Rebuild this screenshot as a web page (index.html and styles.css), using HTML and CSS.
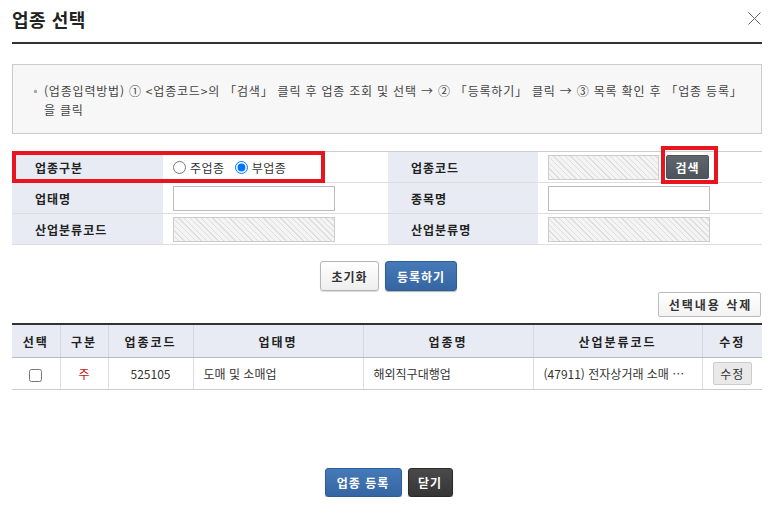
FILE: index.html
```html
<!DOCTYPE html>
<html lang="ko">
<head>
    <meta charset="UTF-8">
    <meta name="viewport" content="width=device-width, initial-scale=1.0">
    <title>업종 선택</title>
    <link rel="stylesheet" href="styles.css">
</head>
<body>
    <div class="pop_wrap">
        <div class="pop_head">
            <h1 class="pop_title">업종 선택</h1>
            <span class="pop_close" title="닫기">
                <svg width="13" height="13" viewBox="0 0 13 13">
                    <path d="M0.5 0.5 L12.5 12.5 M12.5 0.5 L0.5 12.5" stroke="#666" stroke-width="1" fill="none"/>
                </svg>
            </span>
        </div>

        <div class="guide_box">
            <p><span class="bullet"></span>(업종입력방법) ① &lt;업종코드&gt;의 「검색」 클릭 후 업종 조회 및 선택 → ② 「등록하기」 클릭 → ③ 목록 확인 후 「업종 등록」 을 클릭</p>
        </div>

        <div class="form_con">
            <div class="form_grid">
                <div class="th">업종구분</div>
                <div class="td">
                    <label class="rdo"><input type="radio" name="gubun"> 주업종</label>
                    <label class="rdo"><input type="radio" name="gubun" checked> 부업종</label>
                </div>
                <div class="th">업종코드</div>
                <div class="td">
                    <input type="text" class="ipt ipt_short ipt_dis" disabled>
                    <button class="btn_search">검색</button>
                </div>

                <div class="th">업태명</div>
                <div class="td"><input type="text" class="ipt"></div>
                <div class="th">종목명</div>
                <div class="td"><input type="text" class="ipt"></div>

                <div class="th">산업분류코드</div>
                <div class="td"><input type="text" class="ipt ipt_dis" disabled></div>
                <div class="th">산업분류명</div>
                <div class="td"><input type="text" class="ipt ipt_dis" disabled></div>
            </div>
            <!-- 강조 표시 -->
            <div class="mark mark_gubun"></div>
            <div class="mark mark_search"></div>
        </div>

        <div class="btn_row">
            <button class="btn btn_white">초기화</button>
            <button class="btn btn_blue">등록하기</button>
        </div>

        <div class="del_row">
            <button class="btn_del">선택내용 삭제</button>
        </div>

        <table class="list_tbl">
            <colgroup>
                <col style="width:48px">
                <col style="width:48px">
                <col style="width:85px">
                <col style="width:170px">
                <col style="width:170px">
                <col style="width:169px">
                <col style="width:60px">
            </colgroup>
            <thead>
                <tr>
                    <th>선택</th>
                    <th>구분</th>
                    <th>업종코드</th>
                    <th>업태명</th>
                    <th>업종명</th>
                    <th>산업분류코드</th>
                    <th>수정</th>
                </tr>
            </thead>
            <tbody>
                <tr>
                    <td class="c"><input type="checkbox" class="chk"></td>
                    <td class="c red">주</td>
                    <td class="c">525105</td>
                    <td>도매 및 소매업</td>
                    <td>해외직구대행업</td>
                    <td class="ell">(47911) 전자상거래 소매 …</td>
                    <td class="c"><button class="btn_edit">수정</button></td>
                </tr>
            </tbody>
        </table>

        <div class="foot_btns">
            <button class="btn btn_blue btn_foot">업종 등록</button>
            <button class="btn btn_dark btn_foot">닫기</button>
        </div>
    </div>
</body>
</html>
```

FILE: styles.css
```css
body,h1,p{
    margin: 0;
    padding: 0;
}
body{
    font-family: "Noto Sans CJK KR", "Noto Sans", sans-serif;
    font-size: 12px;
    color: #333;
    background-color: #fff;
}
button{
    font-family: inherit;
    cursor: pointer;
}
.pop_wrap{
    width: 750px;
    padding: 0 14px 0 12px;
}
.pop_head{
    height: 42px;
    border-bottom: 2px solid #333;
    display: flex;
    justify-content: space-between;
    align-items: flex-start;
}
.pop_title{
    font-size: 18px;
    font-weight: 700;
    color: #222;
    line-height: 22px;
    padding-top: 8px;
    letter-spacing: 0.5px;
}
.pop_close{
    display: block;
    width: 13px;
    height: 13px;
    margin-top: 11px;
    margin-right: 1px;
}
.guide_box{
    margin-top: 20px;
    border: 1px solid #ccc;
    background-color: #f7f7f7;
    padding: 16px 10px 14px 21px;
    height: 38px;
}
.guide_box p{
    line-height: 19px;
    color: #444;
    letter-spacing: 0.8px;
    padding-left: 10px;
    text-indent: -10px;
    word-break: keep-all;
}
.bullet{
    display: inline-block;
    width: 3px;
    height: 3px;
    background-color: #aaa;
    vertical-align: middle;
    margin: 0 7px 2px 0;
    text-indent: 0;
}
.form_con{
    margin-top: 17px;
    position: relative;
}
.form_grid{
    display: grid;
    grid-template-columns: 151px 225px 150px 224px;
    grid-auto-rows: 31px;
    border-top: 1px solid #ccc;
}
.th,.td{
    border-bottom: 1px solid #ddd;
    display: flex;
    align-items: center;
}
.th{
    background-color: #e8ebf3;
    font-weight: 700;
    color: #222;
    letter-spacing: 1px;
    padding-left: 23px;
}
.td{
    padding-left: 10px;
}
.rdo{
    display: flex;
    align-items: center;
    margin-right: 10px;
    letter-spacing: 0.5px;
}
.rdo input{
    width: 13px;
    height: 13px;
    margin: 0 4px 0 0;
}
.ipt{
    width: 162px;
    height: 25px;
    box-sizing: border-box;
    border: 1px solid #bbb;
    background-color: #fff;
    margin: 0;
}
.ipt_short{
    width: 111px;
}
.ipt_dis{
    border-color: #ccc;
    background: repeating-linear-gradient(45deg, #f4f4f4 0, #f4f4f4 3px, #dedede 3px, #dedede 4px);
}
.btn_search{
    width: 43px;
    height: 24px;
    margin-left: 7px;
    border: 1px solid #4a5058;
    border-radius: 2px;
    background: linear-gradient(#5f666e, #4d535a);
    color: #fff;
    font-weight: 700;
    font-size: 12px;
    padding: 0;
    letter-spacing: 1px;
}
.mark{
    position: absolute;
    border: 4px solid #e8141e;
    box-sizing: border-box;
}
.mark_gubun{
    left: 0;
    top: 0;
    width: 313px;
    height: 32px;
}
.mark_search{
    left: 649px;
    top: -5px;
    width: 57px;
    height: 38px;
}
.btn_row{
    margin-top: 16px;
    display: flex;
    justify-content: center;
    gap: 6px;
    padding-left: 3px;
}
.btn{
    height: 30px;
    padding: 0;
    border-radius: 3px;
    font-size: 12px;
    font-weight: 700;
    letter-spacing: 1px;
}
.btn_white{
    border: 1px solid #b5b5b5;
    background: linear-gradient(#fff, #eee);
    color: #333;
    box-shadow: 0 1px 1px rgba(0,0,0,0.15);
    width: 59px;
}
.btn_blue{
    border: 1px solid #2e5e98;
    background: linear-gradient(#4679b8, #3566a3);
    color: #fff;
    box-shadow: 0 1px 1px rgba(0,0,0,0.3);
    width: 72px;
}
.btn_dark{
    border: 1px solid #2b2b2b;
    background: linear-gradient(#4a4a4a, #353535);
    color: #fff;
    box-shadow: 0 1px 1px rgba(0,0,0,0.3);
    width: 45px;
}
.del_row{
    display: flex;
    justify-content: flex-end;
    margin-top: 1px;
    padding-right: 1px;
}
.btn_del{
    width: 103px;
    height: 25px;
    border: 1px solid #bbb;
    border-radius: 2px;
    background: linear-gradient(#fff, #f3f3f3);
    font-size: 12px;
    font-weight: 700;
    color: #333;
    letter-spacing: 2px;
    padding: 0 0 0 2px;
}
.list_tbl{
    margin-top: 6px;
    width: 750px;
    table-layout: fixed;
    border-collapse: collapse;
    border-top: 2px solid #333;
}
.list_tbl th{
    height: 32px;
    background-color: #e8ebf3;
    font-weight: 700;
    color: #222;
    letter-spacing: 2px;
    border-bottom: 1px solid #bbb;
    border-left: 1px solid #d5d8de;
    padding: 0;
}
.list_tbl td{
    height: 31px;
    border-bottom: 1px solid #ccc;
    border-left: 1px solid #ddd;
    padding: 0 0 0 10px;
    color: #333;
    white-space: nowrap;
    overflow: hidden;
}
.list_tbl th:first-child,
.list_tbl td:first-child{
    border-left: none;
}
.list_tbl td.c{
    text-align: center;
    padding: 0;
}
.list_tbl td.red{
    color: #c8151b;
}
.chk{
    width: 13px;
    height: 13px;
    margin: 0;
    vertical-align: middle;
}
.btn_edit{
    width: 39px;
    height: 23px;
    border: 1px solid #ccc;
    border-radius: 2px;
    background-color: #e9e9e9;
    font-size: 12px;
    color: #333;
    padding: 0;
    letter-spacing: 1px;
}
.foot_btns{
    margin-top: 78px;
    display: flex;
    justify-content: center;
    gap: 6px;
    padding-left: 3px;
}
.btn_foot{
    height: 29px;
}
.btn_blue.btn_foot{
    width: 77px;
}
```
